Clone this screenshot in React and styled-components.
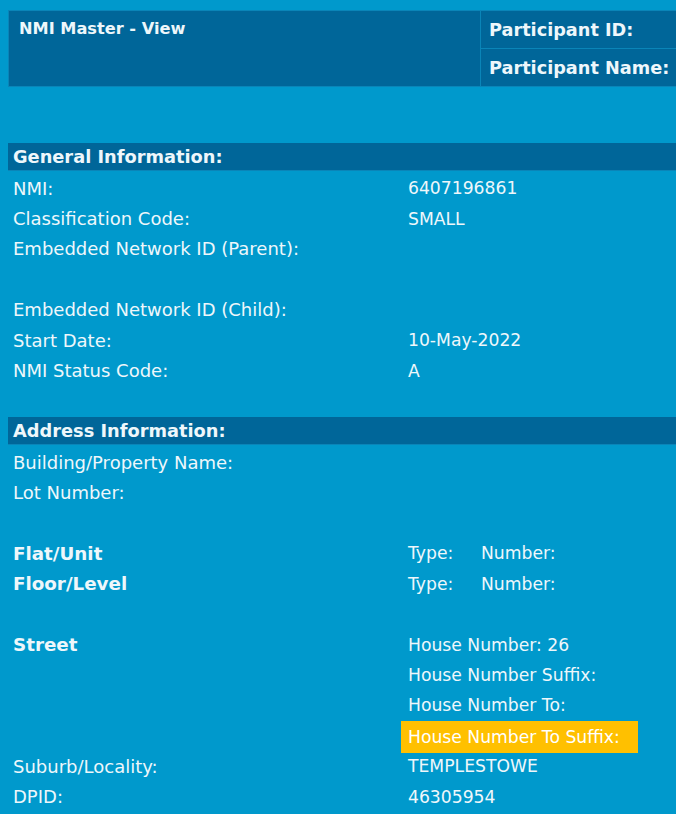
import React from "react";
import styled, { createGlobalStyle } from "styled-components";

const GlobalStyle = createGlobalStyle`
  html, body {
    margin: 0;
    padding: 0;
    background: #0099cc;
  }
  body {
    font-family: "DejaVu Sans", Verdana, sans-serif;
    color: #eef7fb;
    overflow: hidden;
  }
`;

const general = [
  { label: "NMI:", value: "6407196861" },
  { label: "Classification Code:", value: "SMALL" },
  { label: "Embedded Network ID (Parent):", value: "" },
  null,
  { label: "Embedded Network ID (Child):", value: "" },
  { label: "Start Date:", value: "10-May-2022" },
  { label: "NMI Status Code:", value: "A" },
];

export default function App() {
  return (
    <Page>
      <GlobalStyle />
      <Header>
        <TitleCell>NMI Master - View</TitleCell>
        <SideCells>
          <SideCell>Participant ID:</SideCell>
          <SideCell last>Participant Name:</SideCell>
        </SideCells>
      </Header>

      <Section>
        <Bar>General Information:</Bar>
        <Rows>
          {general.map((item, key) =>
            item ? (
              <Row key={key}>
                <Label>{item.label}</Label>
                <Value>{item.value}</Value>
              </Row>
            ) : (
              <Row key={key} />
            )
          )}
          <Row />
        </Rows>
      </Section>

      <Section>
        <Bar>Address Information:</Bar>
        <Rows>
          <Row>
            <Label>Building/Property Name:</Label>
          </Row>
          <Row>
            <Label>Lot Number:</Label>
          </Row>
          <Row />
          <Row>
            <Label bold>Flat/Unit</Label>
            <Pair>
              <PairItem>Type:</PairItem>
              <PairItem>Number:</PairItem>
            </Pair>
          </Row>
          <Row>
            <Label bold>Floor/Level</Label>
            <Pair>
              <PairItem>Type:</PairItem>
              <PairItem>Number:</PairItem>
            </Pair>
          </Row>
          <Row />
          <Row>
            <Label bold>Street</Label>
            <Value>House Number: 26</Value>
          </Row>
          <Row>
            <Label />
            <Value>House Number Suffix:</Value>
          </Row>
          <Row>
            <Label />
            <Value>House Number To:</Value>
          </Row>
          <Row>
            <Label />
            <Value>
              <Highlight>House Number To Suffix:</Highlight>
            </Value>
          </Row>
          <Row>
            <Label>Suburb/Locality:</Label>
            <Value>TEMPLESTOWE</Value>
          </Row>
          <Row>
            <Label>DPID:</Label>
            <Value>46305954</Value>
          </Row>
        </Rows>
      </Section>
    </Page>
  );
}

const Page = styled.div`
  padding: 10px 0 0 8px;
  width: 668px;
`;

const Header = styled.div`
  display: flex;
  height: 77px;
  background: #006699;
  border: 1px solid #0a85b8;
  border-right: none;
  box-sizing: border-box;
`;

const TitleCell = styled.div`
  width: 472px;
  border-right: 1px solid #0a85b8;
  padding: 8px 10px;
  font-size: 16.2px;
  font-weight: bold;
  box-sizing: border-box;
`;

const SideCells = styled.div`
  flex: 1;
  display: flex;
  flex-direction: column;
`;

const SideCell = styled.div`
  flex: 1;
  display: flex;
  align-items: center;
  padding-left: 8px;
  font-size: 17.7px;
  font-weight: bold;
  white-space: nowrap;
  border-bottom: ${({ last }) => (last ? "none" : "1px solid #0a85b8")};
`;

const Section = styled.div`
  margin-top: 56px;
  &:nth-of-type(3) {
    margin-top: 1px;
  }
`;

const Bar = styled.div`
  height: 27px;
  line-height: 27px;
  background: #006699;
  padding-left: 5px;
  font-size: 17.8px;
  font-weight: bold;
  border-bottom: 1px solid #0a85b8;
`;

const Rows = styled.div`
  display: flex;
  flex-direction: column;
  padding-top: 2px;
`;

const Row = styled.div`
  display: grid;
  grid-template-columns: 393px 1fr;
  height: 30.4px;
  align-items: center;
`;

const Label = styled.div`
  padding-left: 5px;
  font-size: ${({ bold }) => (bold ? "18.3px" : "18px")};
  font-weight: ${({ bold }) => (bold ? "bold" : "normal")};
  white-space: nowrap;
`;

const Value = styled.div`
  font-size: 17.2px;
  white-space: nowrap;
  padding-left: 7px;
`;

const Pair = styled.div`
  display: grid;
  grid-template-columns: 73px 1fr;
  padding-left: 7px;
  font-size: 17.2px;
`;

const PairItem = styled.span`
  white-space: nowrap;
`;

const Highlight = styled.span`
  display: inline-block;
  background: #ffc000;
  color: #fff;
  margin-left: -7px;
  padding: 6px 18px 6px 7px;
`;
